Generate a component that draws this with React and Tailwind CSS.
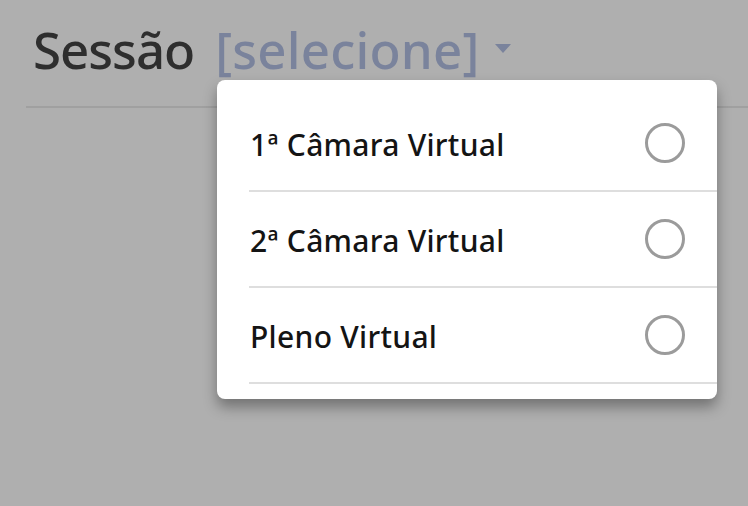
import React from "react";

const items = ["1ª Câmara Virtual", "2ª Câmara Virtual", "Pleno Virtual"];

export default function App() {
  return (
    <div
      className="relative h-[506px] w-full overflow-hidden bg-[#afafaf]"
      style={{ fontFamily: '"Noto Sans", "Open Sans", sans-serif' }}
    >
      <div className="ml-[26px] border-b-2 border-[#a0a0a0] pl-[7px] pt-[24px] pb-[31px]">
        <div className="flex items-baseline text-[51px] leading-none">
          <span className="font-medium tracking-[-1px] text-[#2e2e2e]">Sessão</span>
          <span className="ml-[21px] font-medium tracking-[0.2px] text-[#7a839c]">[selecione]</span>
          <svg className="ml-[16px] self-start mt-[20px]" width="16" height="9" viewBox="0 0 16 9">
            <path d="M0 0 L16 0 L8 9 Z" fill="#7a839c" />
          </svg>
        </div>
      </div>

      <div className="absolute left-[217px] top-[80px] w-[500px] rounded-[8px] bg-white pt-[16px] pb-[15px] shadow-[0_8px_14px_rgba(0,0,0,0.35)]">
        {items.map((t) => (
          <div key={t} className="ml-[32px] flex h-[96px] items-center justify-between border-b-2 border-[#dedede] pr-[32px]">
            <span className="pl-[1px] pt-[2px] text-[30px] font-medium tracking-[0.3px] text-[#141414]">{t}</span>
            <span className="h-[40px] w-[40px] rounded-full border-[3px] border-[#9b9b9b]" />
          </div>
        ))}
      </div>
    </div>
  );
}
